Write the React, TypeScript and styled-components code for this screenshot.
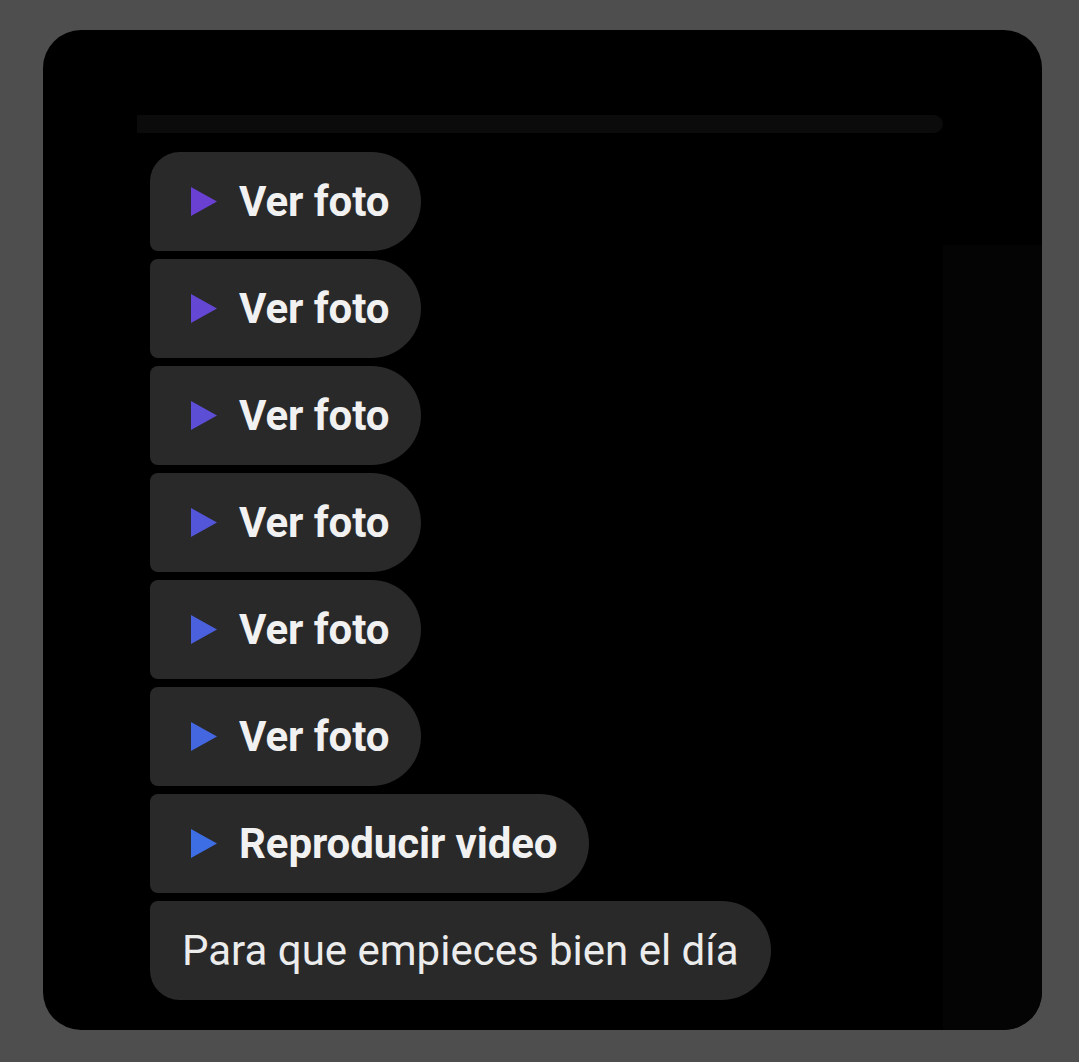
import React from "react";
import styled, { createGlobalStyle } from "styled-components";

const Global = createGlobalStyle`
  html, body {
    margin: 0;
    padding: 0;
    background: #4e4e4e;
  }
  body {
    font-family: Roboto, "Noto Sans", "Liberation Sans", sans-serif;
  }
`;

const Page = styled.div`
  width: 1079px;
  height: 1062px;
  box-sizing: border-box;
  padding: 30px 37px 32px 43px;
  background: #4e4e4e;
`;

const Card = styled.div`
  height: 1000px;
  background: #000;
  border-radius: 38px;
  box-sizing: border-box;
  padding: 85px 0 0 94px;
  display: flex;
  overflow: hidden;
`;

const Screen = styled.div`
  width: 806px;
  display: flex;
  flex-direction: column;
`;

const SideShade = styled.div`
  flex: 1;
  margin-top: 130px;
  background: #040404;
`;

const TopBar = styled.div`
  height: 18px;
  background: #0b0b0b;
  border-radius: 0 9px 9px 0;
`;

const List = styled.div`
  display: flex;
  flex-direction: column;
  align-items: flex-start;
  gap: 8px;
  padding: 19px 0 0 13px;
`;

const Bubble = styled.div<{ $pos: "first" | "mid" | "last" }>`
  height: 99px;
  box-sizing: border-box;
  display: flex;
  align-items: center;
  gap: 21px;
  background: #29292a;
  color: #f1f1f1;
  padding: 0 32px 0 40px;
  border-radius: ${(p) =>
    p.$pos === "first"
      ? "30px 50px 50px 8px"
      : p.$pos === "last"
      ? "8px 50px 50px 30px"
      : "8px 50px 50px 8px"};
`;

const TextBubble = styled(Bubble)`
  padding: 0 32px;
`;

const Label = styled.span`
  font-size: 42px;
  font-weight: 700;
  letter-spacing: -0.1px;
  line-height: 1;
`;

const Plain = styled.span`
  font-size: 42px;
  font-weight: 400;
  line-height: 1;
  color: #ececec;
`;

const PlayIcon = ({ color }: { color: string }) => (
  <svg width="28" height="31" viewBox="0 0 28 31" aria-hidden="true">
    <polygon points="1,1 27,15.5 1,30" fill={color} />
  </svg>
);

const items = [
  { text: "Ver foto", color: "#6a40d2" },
  { text: "Ver foto", color: "#6447d3" },
  { text: "Ver foto", color: "#5c4fd6" },
  { text: "Ver foto", color: "#5456d9" },
  { text: "Ver foto", color: "#4b60dd" },
  { text: "Ver foto", color: "#4467e0" },
  { text: "Reproducir video", color: "#3e6ee4" },
];

export default function App() {
  return (
    <>
      <Global />
      <Page>
        <Card>
          <Screen>
            <TopBar />
            <List>
              {items.map((it, i) => (
                <Bubble key={i} $pos={i === 0 ? "first" : "mid"}>
                  <PlayIcon color={it.color} />
                  <Label>{it.text}</Label>
                </Bubble>
              ))}
              <TextBubble $pos="last">
                <Plain>Para que empieces bien el día</Plain>
              </TextBubble>
            </List>
          </Screen>
          <SideShade />
        </Card>
      </Page>
    </>
  );
}
